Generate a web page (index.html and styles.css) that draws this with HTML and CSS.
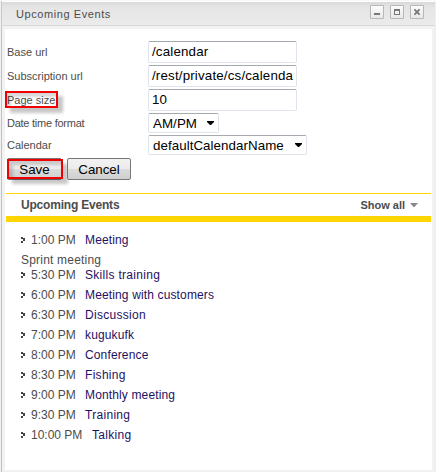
FILE: index.html
```html
<!DOCTYPE html>
<html lang="en">
<head>
<meta charset="utf-8">
<title>Upcoming Events</title>
<link rel="stylesheet" href="styles.css">
</head>
<body>
<div class="window">
  <header class="titlebar">
    <span class="title">Upcoming Events</span>
    <span class="ctl"><svg width="12" height="12"><path d="M3 7h6v2H3z" fill="#777"/></svg></span>
    <span class="ctl"><svg width="12" height="12"><path d="M3 3h6v6H3zM4 5v3h4V5z" fill="#777" fill-rule="evenodd"/></svg></span>
    <span class="ctl"><svg width="12" height="12"><path d="M3.4 3.4l5.2 5.2M8.6 3.4l-5.2 5.2" stroke="#777" stroke-width="1.8"/></svg></span>
  </header>
  <main class="content">
    <div class="form">
      <div class="row"><span class="label">Base url</span><div class="field">/calendar</div></div>
      <div class="row"><span class="label">Subscription url</span><div class="field">/rest/private/cs/calenda</div></div>
      <div class="row"><span class="label">Page size<i class="mark"></i></span><div class="field">10</div></div>
      <div class="row short"><span class="label l4">Date time format</span><div class="select s1"><span>AM/PM</span><svg width="7" height="5"><path d="M0 0h7v1L4 4H3L0 1z"/></svg></div></div>
      <div class="row short"><span class="label">Calendar</span><div class="select s2"><span>defaultCalendarName</span><svg width="7" height="5"><path d="M0 0h7v1L4 4H3L0 1z"/></svg></div></div>
      <div class="buttons"><div class="btn save">Save<i class="mark"></i></div><div class="btn cancel">Cancel</div></div>
    </div>
    <div class="heading"><b class="name">Upcoming Events</b><b class="all">Show all</b><svg width="8" height="5"><path d="M0 0h8L4.5 4h-1z" fill="#888"/></svg></div>
    <div class="events">
      <div class="event"><svg class="dot" width="4" height="6"><path d="M0 0h2v1h2v3H2v2H0V4h2V2H0z"/></svg><span class="time">1:00 PM</span><a>Meeting</a></div>
      <div class="note">Sprint meeting</div>
      <div class="event"><svg class="dot" width="4" height="6"><path d="M0 0h2v1h2v3H2v2H0V4h2V2H0z"/></svg><span class="time">5:30 PM</span><a class="loose">Skills training</a></div>
      <div class="event"><svg class="dot" width="4" height="6"><path d="M0 0h2v1h2v3H2v2H0V4h2V2H0z"/></svg><span class="time">6:00 PM</span><a>Meeting with customers</a></div>
      <div class="event"><svg class="dot" width="4" height="6"><path d="M0 0h2v1h2v3H2v2H0V4h2V2H0z"/></svg><span class="time">6:30 PM</span><a class="loose">Discussion</a></div>
      <div class="event"><svg class="dot" width="4" height="6"><path d="M0 0h2v1h2v3H2v2H0V4h2V2H0z"/></svg><span class="time">7:00 PM</span><a>kugukufk</a></div>
      <div class="event"><svg class="dot" width="4" height="6"><path d="M0 0h2v1h2v3H2v2H0V4h2V2H0z"/></svg><span class="time">8:00 PM</span><a>Conference</a></div>
      <div class="event"><svg class="dot" width="4" height="6"><path d="M0 0h2v1h2v3H2v2H0V4h2V2H0z"/></svg><span class="time">8:30 PM</span><a class="loose">Fishing</a></div>
      <div class="event"><svg class="dot" width="4" height="6"><path d="M0 0h2v1h2v3H2v2H0V4h2V2H0z"/></svg><span class="time">9:00 PM</span><a>Monthly meeting</a></div>
      <div class="event"><svg class="dot" width="4" height="6"><path d="M0 0h2v1h2v3H2v2H0V4h2V2H0z"/></svg><span class="time">9:30 PM</span><a class="loose">Training</a></div>
      <div class="event"><svg class="dot" width="4" height="6"><path d="M0 0h2v1h2v3H2v2H0V4h2V2H0z"/></svg><span class="time wide">10:00 PM</span><a class="loose">Talking</a></div>
    </div>
  </main>
</div>
</body>
</html>
```
FILE: styles.css
```css
* { box-sizing: border-box; }
body { margin: 0; background: #f0f0f0; font-family: "Liberation Sans", Arial, sans-serif; font-size: 12px; color: #4c4c4c; overflow: hidden; }
.window { width: 436px; height: 472px; border-top: 1px solid #f8f8f8; border-left: 1px solid #f0f0f0; white-space: nowrap; background: linear-gradient(90deg, #c2c2c2 1px, #f0f0f0 1px); }
.titlebar { height: 25px; width: 434px; display: flex; align-items: flex-start; gap: 6px; padding: 4px 11px 0 14px; border-bottom: 1px solid #d8d8d8; border-left: 1px solid #c8c8c8; background: linear-gradient(#fff 0, #fff 1px, #d9d9d9 1px, #e5e5e5 6px, #ebebeb 100%); }
.title { flex: 1; font-size: 11px; line-height: 18px; letter-spacing: .58px; }
.ctl { width: 14px; height: 14px; border: 1px solid #b7b7b7; border-radius: 1px; background: linear-gradient(#fcfcfc, #e8e8e8); }
.ctl svg { display: block; }
.content { height: 445px; margin-left: 1px; width: 432px; border: solid #f2f2f2; border-width: 3px 2px 1px 3px; background: #fff; padding-top: 12px; }
.form { padding-left: 2px; height: 152px; }
.row { height: 24px; display: flex; }
.row.short { height: 22px; }
.label { width: 141px; font-size: 11px; line-height: 22px; position: relative; }
.short .label { line-height: 20px; }
.l4 { letter-spacing: -.25px; }
.field { width: 149px; height: 22px; border: 1px solid #dfe3eb; border-top-color: #a7a9b0; border-radius: 2px; font-size: 13.33px; letter-spacing: .17px; line-height: 20px; color: #000; padding-left: 3px; overflow: hidden; }
.select { height: 20px; border: 1px solid #dfe3eb; border-top-color: #a7a9b0; border-radius: 2px; font-size: 13.33px; letter-spacing: .06px; line-height: 19px; color: #000; display: flex; justify-content: space-between; align-items: center; padding: 0 4px; }
.s1 { width: 71px; }
.s2 { width: 159px; }
.buttons { display: flex; gap: 5px; margin-top: 1px; }
.btn { height: 22px; border: 1px solid #777; border-radius: 2px; background: linear-gradient(#f2f2f2 0, #ebebeb 50%, #dcdcdc 51%, #cfcfcf 100%); color: #000; font-size: 13.33px; line-height: 21px; text-align: center; position: relative; }
.save { width: 55px; }
.cancel { width: 64px; }
.mark { position: absolute; border: 2px solid #f00000; box-shadow: 5px 5px 3px rgba(0,0,0,.22), inset 4px 4px 3px rgba(0,0,0,.16); }
.label .mark { left: -2px; top: 2px; width: 53px; height: 17px; }
.save .mark { left: -1px; top: 0; width: 56px; height: 20px; }
.heading { height: 29px; margin: 0 1px; border-top: 1px solid #ffd400; border-bottom: 6px solid #ffd400; display: flex; align-items: center; padding: 0 13px 0 15px; }
.name { flex: 1; letter-spacing: -.2px; }
.all { font-size: 11px; margin-right: 5px; }
.events { padding: 8px 0 0 16px; }
.event { height: 20px; display: flex; align-items: center; }
.dot { fill: #444; margin-right: 6px; }
.time { width: 54px; }
.time.wide { width: 61px; }
.event a { color: #1d1264; letter-spacing: .14px; }
.event .loose { letter-spacing: .3px; }
.note { height: 15px; line-height: 20px; letter-spacing: .2px; }
```
